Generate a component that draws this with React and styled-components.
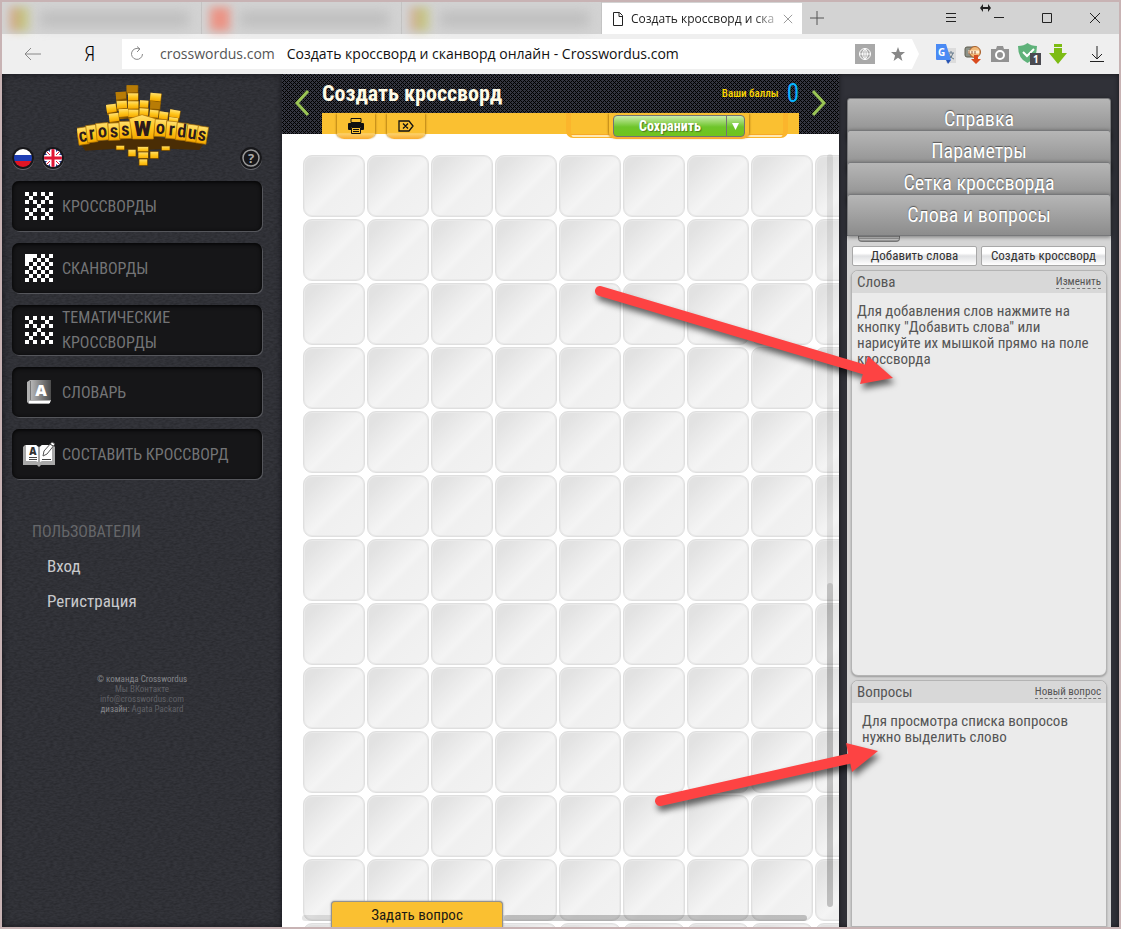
import styled, { createGlobalStyle } from "styled-components";

const condensed = `"Roboto Condensed", "Liberation Sans Narrow", "Open Sans Condensed", Roboto, sans-serif`;
const system = `"Open Sans", "Noto Sans", sans-serif`;

const noise = `url("data:image/svg+xml,%3Csvg xmlns='http://www.w3.org/2000/svg' width='120' height='120'%3E%3Cfilter id='n'%3E%3CfeTurbulence type='fractalNoise' baseFrequency='.25 .55' numOctaves='2' stitchTiles='stitch'/%3E%3CfeColorMatrix values='0 0 0 0 0 0 0 0 0 0 0 0 0 0 0 .4 0 0 0 -.12'/%3E%3C/filter%3E%3Crect width='120' height='120' filter='url(%23n)'/%3E%3C/svg%3E")`;
const mesh = `url("data:image/svg+xml,%3Csvg xmlns='http://www.w3.org/2000/svg' width='4' height='4' shape-rendering='crispEdges'%3E%3Cpath d='M0 0h1v1H0zM1 1h1v1H1zM2 2h1v1H2zM3 3h1v1H3zM3 1h1v1H3zM1 3h1v1H1z'/%3E%3C/svg%3E")`;

const GlobalStyle = createGlobalStyle`
  * { box-sizing: border-box; }
  body { margin: 0; font-family: ${condensed}; }
  button, input { font: inherit; color: inherit; border: 0; padding: 0; background: none; }
  a { color: inherit; text-decoration: none; }
  h1, h2, p { margin: 0; font-weight: inherit; }
  svg { display: block; flex: none; }
`;

const Window = styled.div`
  height: 100vh;
  display: flex;
  flex-direction: column;
  border: 2px solid #c8b3b4;
  overflow: hidden;
`;

/* browser chrome */

const TabStrip = styled.div`
  flex: none;
  height: 32px;
  display: flex;
  align-items: flex-end;
  background: #d3d3d3;
  font: 12px/18px ${system};
`;

const HiddenTabs = styled.div`
  width: 600px;
  height: 32px;
  display: flex;
`;

const HiddenTab = styled.div`
  flex: 1;
  display: flex;
  align-items: center;
  gap: 10px;
  padding: 4px 12px 2px 8px;
  border-right: 1px solid #c4c4c4;
`;

const Smudge = styled.span`
  width: 20px;
  height: 24px;
  filter: blur(5px);
  opacity: 0.6;
  background: ${(p) => p.$fill};
`;

const SmudgeLine = styled.span`
  flex: 1;
  height: 16px;
  filter: blur(6px);
  background: #bfbfbf;
`;

const ActiveTab = styled.div`
  width: 200px;
  height: 31px;
  display: flex;
  align-items: center;
  gap: 8px;
  padding: 0 9px 0 11px;
  background: #fff;
  color: #222;
`;

const TabTitle = styled.span`
  flex: 1;
  white-space: nowrap;
  mask-image: linear-gradient(to right, #000 85%, rgba(0, 0, 0, 0.3));
`;

const WindowButtons = styled.div`
  flex: 1;
  height: 32px;
  display: flex;
  align-items: center;
  justify-content: flex-end;
  gap: 36px;
  padding-right: 18px;
`;

const IconButton = styled.button`
  display: flex;
`;

const NewTab = styled(IconButton)`
  padding: 0 8px;
  align-self: center;
`;

const ResizeCursor = styled.svg`
  position: absolute;
  top: 4px;
  right: 130px;
`;

const AddressRow = styled.div`
  flex: none;
  height: 40px;
  display: flex;
  align-items: center;
  background: #efefef;
  font: 14px/20px ${system};
`;

const NavButtons = styled.div`
  width: 120px;
  display: flex;
  align-items: center;
  justify-content: space-between;
  padding: 0 27px 0 22px;
`;

const YandexButton = styled.button`
  font-family: ${condensed};
  font-size: 20px;
  font-weight: 300;
`;

const AddressBar = styled.div`
  flex: 1;
  height: 30px;
  display: flex;
  align-items: center;
  padding: 0 14px 0 8px;
  background: #fff;
  clip-path: polygon(0 0, calc(100% - 7px) 0, 100% 50%, calc(100% - 7px) 100%, 0 100%);
`;

const Domain = styled.label`
  padding: 0 12px 0 15px;
  color: #555;
`;

const PageName = styled.input`
  flex: 1;
  min-width: 0;
  color: #111;
`;

const AddressIcons = styled.div`
  display: flex;
  align-items: center;
  gap: 16px;
`;

const Extensions = styled.div`
  display: flex;
  align-items: center;
  gap: 8px;
  padding: 0 14px 0 17px;
`;

const DownloadButton = styled(IconButton)`
  margin-left: 14px;
`;

/* site */

const Site = styled.div`
  position: relative;
  flex: 1;
  min-height: 0;
  display: flex;
`;

const Sidebar = styled.aside`
  flex: none;
  width: 280px;
  padding: 10px 20px 0 10px;
  background: ${noise}, #34353b;
  box-shadow: inset 0 0 6px #15151a;
`;

const Brand = styled.div`
  height: 97px;
  display: grid;
  grid-template-columns: 65px 1fr 22px;
  align-items: start;
`;

const Languages = styled.div`
  display: flex;
  gap: 8px;
  padding-top: 63px;
`;

const RoundButton = styled.button`
  width: 22px;
  height: 22px;
  display: flex;
  align-items: center;
  justify-content: center;
  border-radius: 50%;
  background: #17171a;
  box-shadow: 0 1px 0 #66676c;
`;

const Help = styled(RoundButton)`
  margin-top: 63px;
`;

const Menu = styled.nav`
  display: grid;
  gap: 12px;
`;

const MenuItem = styled.a`
  height: 50px;
  display: flex;
  align-items: center;
  gap: 7px;
  padding: 0 10px;
  border-radius: 7px;
  background: #161618;
  box-shadow: inset 0 1px 4px #000, 1px 1px 0 #55565b;
  color: #737476;
  font-size: 16px;
  line-height: 25px;
  text-transform: uppercase;
`;

const MenuIcon = styled.span`
  flex: none;
  width: 33px;
  display: flex;
  justify-content: center;
`;

const Users = styled.section`
  padding: 40px 20px 0;
  color: #c8c9cc;
  font-size: 17px;
  line-height: 35px;
`;

const UsersTitle = styled.h2`
  color: #66676a;
  font-size: 16px;
  line-height: 25px;
  margin-bottom: 5px;
  text-transform: uppercase;
`;

const UserLink = styled.a`
  display: block;
  padding-left: 15px;
`;

const Credits = styled.footer`
  padding-top: 55px;
  padding-left: 10px;
  text-align: center;
  color: #606166;
  font-size: 9px;
  line-height: 10px;
`;

const CreditName = styled.span`
  color: #85868a;
`;

const Main = styled.main`
  position: relative;
  flex: 1;
  min-width: 0;
  display: flex;
  flex-direction: column;
  background: #fff;
`;

const Header = styled.header`
  flex: none;
  height: 60px;
  display: grid;
  grid-template-columns: 40px 1fr 40px;
  background: ${mesh}, #34353f;
`;

const Pager = styled.button`
  display: flex;
  justify-content: center;
  padding-top: 16px;
`;

const HeaderBody = styled.div`
  display: flex;
  flex-direction: column;
`;

const TitleRow = styled.div`
  height: 39px;
  display: flex;
  align-items: center;
  justify-content: space-between;
`;

const Title = styled.h1`
  color: #fffbe6;
  font-size: 22px;
  font-weight: bold;
  line-height: 38px;
`;

const Score = styled.p`
  display: flex;
  align-items: center;
  gap: 8px;
  color: #ffd800;
  font-size: 11px;
  font-weight: 500;
`;

const ScoreValue = styled.strong`
  color: #09b4ff;
  font-size: 25px;
  font-weight: normal;
`;

const Toolbar = styled.div`
  height: 21px;
  display: flex;
  align-items: flex-start;
  gap: 12px;
  padding: 0 11px 0 15px;
  background: #fac031;
`;

const ToolButton = styled.button`
  width: 38px;
  height: 26px;
  display: flex;
  align-items: center;
  justify-content: center;
  border-radius: 0 0 7px 7px;
  background: linear-gradient(#fac031 75%, #fcd06a 80%, #f9ac30);
  box-shadow: -2px 0 2px -1px #b98314, 2px 0 2px -1px #b98314;
`;

const SaveDock = styled.div`
  width: 222px;
  height: 25px;
  margin-left: auto;
  padding-left: 4px;
  display: flex;
  justify-content: center;
  border: solid #fbb52c;
  border-width: 0 5px 1px;
  border-radius: 0 0 7px 7px;
  background: linear-gradient(#fac031 21px, #f7a928 21px 22px, #ffe9b5 22px);
`;

const SaveFrame = styled.div`
  width: 140px;
  height: 26px;
  display: flex;
  padding: 2px 4px;
  border-radius: 0 0 7px 7px;
  background: linear-gradient(#fac031 70%, #faa832);
  box-shadow: -2px 0 2px -1px #b98314, 2px 0 2px -1px #b98314;
`;

const SaveButton = styled.button`
  flex: 1;
  height: 22px;
  border: 1px solid #737373;
  border-radius: 4px 0 0 4px;
  background: linear-gradient(#c9ecab, #6ec52a 55%, #71c41c);
  color: #fff;
  font-size: 14px;
  font-weight: bold;
  line-height: 20px;
  text-shadow: 1px 1px 1px #4c7a1c;
`;

const SaveMenu = styled(SaveButton)`
  flex: none;
  width: 19px;
  margin-left: -1px;
  display: flex;
  align-items: center;
  justify-content: center;
  border-radius: 0 4px 4px 0;
`;

const FieldClip = styled.div`
  flex: 1;
  min-height: 0;
  display: flex;
  overflow: hidden;
`;

/* one column wider than the view, so the last one runs under the edge */
const Field = styled.div`
  flex: none;
  width: calc(100% + 64px);
  display: grid;
  grid-template-columns: repeat(auto-fill, 62px);
  grid-auto-rows: 62px;
  gap: 2px;
  padding: 21px 0 0 21px;
`;

const Cell = styled.div`
  border: 1px solid #dfdfdf;
  border-radius: 9px;
  background: linear-gradient(135deg, #e2e2e2 15%, #f4f4f4 52%, #f0f0f0 60%, #f2f2f2) border-box;
  box-shadow: inset 0 0 0 1px #e9e9e9;
`;

const VerticalScroll = styled.div`
  position: absolute;
  top: 80px;
  right: 6px;
  bottom: 20px;
  width: 6px;
  display: flex;
  align-items: flex-end;
  border-radius: 3px;
  background: rgba(0, 0, 0, 0.08);
`;

const VerticalThumb = styled.div`
  width: 6px;
  height: 43%;
  border-radius: 3px;
  background: rgba(0, 0, 0, 0.14);
`;

const HorizontalScroll = styled.div`
  position: absolute;
  left: 20px;
  right: 32px;
  bottom: 6px;
  height: 6px;
  display: flex;
  justify-content: flex-end;
  border-radius: 3px;
  background: rgba(0, 0, 0, 0.1);
`;

const HorizontalThumb = styled.div`
  width: 60%;
  height: 6px;
  border-radius: 3px;
  background: rgba(0, 0, 0, 0.12);
`;

const AskButton = styled.button`
  position: absolute;
  left: 49px;
  bottom: 0;
  width: 172px;
  height: 26px;
  border: 1px solid #929292;
  border-bottom: 0;
  border-radius: 4px 4px 0 0;
  background: #fac031;
  box-shadow: 0 0 2px #888;
  color: #1c1a14;
  font-size: 15px;
`;

const Tools = styled.aside`
  flex: none;
  width: 280px;
  display: flex;
  flex-direction: column;
  padding: 24px 8px 0;
  background: #303138;
  box-shadow: inset 0 0 5px #17171b;
`;

const Accordion = styled.div`
  position: relative;
  display: grid;
  grid-auto-rows: 32px;
  padding-bottom: 10px;
`;

const AccordionTab = styled.button`
  height: 42px;
  border: 1px solid #77787a;
  border-radius: 3px 3px 0 0;
  background: linear-gradient(#b6b6b6, #8c8c8c);
  box-shadow: 0 1px 4px rgba(0, 0, 0, 0.45);
  color: #fff;
  font-size: 20px;
  text-shadow: 0 -1px 1px #555;
`;

const ToolsBody = styled.div`
  flex: 1;
  display: flex;
  flex-direction: column;
  gap: 4px;
  padding: 0 4px;
  background: #d5d5d5;
`;

const Handle = styled.div`
  width: 42px;
  height: 6px;
  margin: 0 0 0 7px;
  border: 1px solid #777;
  border-top: 0;
  border-radius: 0 0 4px 4px;
  background: linear-gradient(#999 1px, #c4c4c4 1px 2px, #999 2px 3px, #c4c4c4 3px 4px, #999 4px);
`;

const WordActions = styled.div`
  display: grid;
  grid-template-columns: 1fr 1fr;
  gap: 4px;
  padding: 0 1px;
`;

const WordButton = styled.button`
  height: 20px;
  border: 1px solid #a8a8a8;
  border-radius: 2px;
  background: linear-gradient(#fff 35%, #e0e1e3 50%, #fff);
  color: #333;
  font-size: 13px;
  line-height: 16px;
`;

const Panel = styled.section`
  ${(p) => (p.$grow ? "flex: 1; border-radius: 7px 7px 0 0;" : "height: 406px; border-radius: 7px;")}
  overflow: hidden;
  border: 1px solid #b4b4b4;
  background: #ebebeb;
  box-shadow: 0 1px 2px #999;
`;

const PanelHead = styled.header`
  height: 22px;
  display: flex;
  align-items: center;
  justify-content: space-between;
  padding: 0 5px;
  background: #d8d8d8;
  color: #555;
  font-size: 15px;
`;

const PanelAction = styled.button`
  border-bottom: 1px dashed #777;
  font-size: 11px;
  line-height: 13px;
`;

const PanelText = styled.p`
  padding: 10px ${(p) => (p.$inset ? 10 : 5)}px;
  color: #555;
  font-size: 15px;
  line-height: 16px;
`;

const Arrow = styled.svg`
  position: absolute;
  top: ${(p) => p.$top}px;
  right: ${(p) => p.$right}px;
  filter: drop-shadow(2px 5px 3px rgba(0, 0, 0, 0.6));
  pointer-events: none;
`;

const sparse = ["1010101", "0100010", "1010101", "0001000", "1010101", "0100010", "1010101"];
const dense = ["1110101", "1101010", "1010101", "0101010", "1010101", "0101010", "1010101"];

const Checker = ({ rows }) => (
  <svg width="28" height="28" viewBox="0 0 7 7" shapeRendering="crispEdges" fill="#fff">
    {rows.flatMap((row, y) =>
      [...row].map((on, x) => on === "1" && <rect key={`${x}-${y}`} x={x} y={y} width="1" height="1" />)
    )}
  </svg>
);

const BookIcon = () => (
  <svg width="24" height="26" viewBox="0 0 24 26">
    <defs>
      <linearGradient id="cover">
        <stop offset="0" stopColor="#b5b5b5" />
        <stop offset="1" stopColor="#4c4c4c" />
      </linearGradient>
    </defs>
    <path d="M3 1h21v21l-2 3H2l-2-2V3z" fill="#b0b0b0" />
    <path d="M4 1h20v20H4z" fill="url(#cover)" />
    <path d="M2 22h21v2H2z" fill="#fff" />
    <path d="M3.500 2v19" stroke="#777" />
    <text x="14" y="17" textAnchor="middle" fontFamily="Open Sans" fontWeight="800" fontSize="16" fill="#fff">A</text>
  </svg>
);

const ComposeIcon = () => (
  <svg width="32" height="26" viewBox="0 0 32 26">
    <path d="M0 6l2-2h11l3 2 3-2h11l2 2v18H18l-2 2-2-2H0z" fill="#a9a9a9" />
    <path d="M3 4h10l2 2v15l-2-1H3zM29 4H19l-2 2v15l2-1h10z" fill="#fff" />
    <text x="10" y="14" textAnchor="middle" fontFamily="Open Sans" fontWeight="800" fontSize="10" fill="#333">A</text>
    <path d="M6 16.500h8M6 18.500h8M19 18.500h9" stroke="#444" />
    <path d="M20 15l1-5 8-9 3 2-8 10z" fill="#fff" stroke="#555" />
    <path d="M27 3l3 2" stroke="#333" />
  </svg>
);

const menu = [
  { label: "Кроссворды", icon: <Checker rows={sparse} /> },
  { label: "Сканворды", icon: <Checker rows={dense} /> },
  { label: "Тематические кроссворды", icon: <Checker rows={sparse} /> },
  { label: "Словарь", icon: <BookIcon /> },
  { label: "Составить кроссворд", icon: <ComposeIcon /> },
];

const logoLetters = [
  ["c", 233, 160, 31, -9],
  ["r", 260, 153, 31, -7],
  ["o", 289, 147, 37, -5],
  ["s", 325, 147, 34, -3],
  ["s", 358, 142, 36, -2],
  ["o", 463, 136, 37, 3],
  ["r", 498, 142, 34, 5],
  ["d", 529, 147, 34, 6],
  ["u", 560, 152, 34, 8],
  ["s", 591, 157, 31, 9],
];

const logoBlocks = [
  [380, 34, 35, 24, 0, 1], [347, 55, 32, 24, -4, 1], [384, 58, 32, 24, 0], [452, 56, 34, 26, 6],
  [318, 93, 31, 27, -8], [350, 82, 32, 25, -4], [384, 82, 33, 25, 0], [420, 79, 27, 24, 3],
  [452, 82, 31, 24, 5, 1], [511, 106, 32, 25, 9], [326, 120, 31, 27, -7], [356, 106, 30, 26, -4],
  [385, 107, 32, 25, 0], [419, 103, 28, 24, 3], [450, 107, 28, 25, 5], [479, 112, 28, 25, 7], [508, 129, 29, 20, 8],
];

const logoDrops = [
  [348, 214, 26, 14], [384, 226, 24, 22], [412, 218, 34, 16], [414, 234, 31, 20],
  [417, 255, 26, 20], [450, 232, 26, 22], [484, 216, 26, 14],
];

const Logo = () => (
  <svg width="133" height="84" viewBox="231 30 399 252" role="img" aria-label="Crosswordus">
    <defs>
      <linearGradient id="gold" x2="0" y2="1">
        <stop offset="0" stopColor="#ffdf70" />
        <stop offset="0.5" stopColor="#ffc820" />
        <stop offset="1" stopColor="#f5a800" />
      </linearGradient>
      <linearGradient id="bronze" x2="1" y2="1">
        <stop offset="0" stopColor="#c88700" />
        <stop offset="1" stopColor="#6b4300" />
      </linearGradient>
    </defs>
    {logoBlocks.map(([x, y, w, h, r, dark]) => (
      <g key={`${x}-${y}`} transform={`rotate(${r} ${x} ${y})`}>
        <rect x={x} y={y} width={w} height={h + 4} fill="url(#bronze)" />
        <rect x={x} y={y} width={w - 2} height={h - 3} fill={dark ? "#b87c06" : "url(#gold)"} />
      </g>
    ))}
    <path d="M242 210l152-22h66l152 20-14 20-90-4-80 4-80-4-92 6z" fill="#4a2d05" />
    {logoDrops.map(([x, y, w, h]) => (
      <rect key={`${x}-${y}`} x={x} y={y} width={w} height={h} fill="url(#gold)" stroke="#5d3b00" strokeWidth="2" />
    ))}
    {logoLetters.map(([letter, x, y, w, r]) => (
      <g key={x} transform={`rotate(${r} ${x + w / 2} ${y + 26})`}>
        <rect x={x} y={y} width={w} height="52" fill="url(#gold)" stroke="#a56a00" strokeWidth="2" />
        <text x={x + w / 2} y={y + 43} textAnchor="middle" fontFamily="Roboto Condensed" fontWeight="600" fontSize="56" fill="#2d1b1b">
          {letter}
        </text>
      </g>
    ))}
    <path d="M388 134l38-12 40 12-6 61h-62z" fill="url(#gold)" stroke="#b87500" strokeWidth="2" />
    <text x="428" y="185" textAnchor="middle" fontFamily="Roboto Condensed" fontWeight="800" fontSize="84" fill="#2d1b1b">w</text>
  </svg>
);

const Cross = ({ size = 12, color = "#222" }) => (
  <svg width={size} height={size} viewBox="0 0 12 12" stroke={color} fill="none">
    <path d="M1 1l10 10M11 1L1 11" />
  </svg>
);

const Browser = () => (
  <>
    <TabStrip>
      <HiddenTabs>
        <HiddenTab>
          <Smudge $fill="linear-gradient(90deg, #d97b52, #b7b843 60%, #c9c98a)" />
          <SmudgeLine />
        </HiddenTab>
        <HiddenTab>
          <Smudge $fill="#fb6a52" />
          <SmudgeLine />
        </HiddenTab>
        <HiddenTab>
          <Smudge $fill="linear-gradient(90deg, #d9927b, #b7b843 60%, #c9c98a)" />
          <SmudgeLine />
        </HiddenTab>
      </HiddenTabs>
      <ActiveTab>
        <svg width="10" height="14" viewBox="0 0 10 14" fill="none" stroke="#222">
          <path d="M.5.5h6l3 3v10h-9zM6 .5v4h3.500" />
        </svg>
        <TabTitle>Создать кроссворд и ска</TabTitle>
        <IconButton aria-label="Закрыть вкладку"><Cross size={10} color="#888" /></IconButton>
      </ActiveTab>
      <NewTab aria-label="Новая вкладка">
        <svg width="14" height="14" viewBox="0 0 14 14" stroke="#555"><path d="M7 0v14M0 7h14" /></svg>
      </NewTab>
      <WindowButtons>
        <IconButton aria-label="Меню">
          <svg width="12" height="12" viewBox="0 0 12 12" stroke="#222"><path d="M1 1.500h10M1 5.500h10M1 9.500h10" /></svg>
        </IconButton>
        <IconButton aria-label="Свернуть">
          <svg width="12" height="12" viewBox="0 0 12 12" stroke="#222"><path d="M1 5.500h10" /></svg>
        </IconButton>
        <IconButton aria-label="Развернуть">
          <svg width="12" height="12" viewBox="0 0 12 12" stroke="#222" fill="none"><path d="M1.500 1.500h9v9h-9z" /></svg>
        </IconButton>
        <IconButton aria-label="Закрыть"><Cross /></IconButton>
      </WindowButtons>
      <ResizeCursor width="11" height="8" viewBox="0 0 11 8" fill="#222">
        <path d="M0 4l3-4v3h5V0l3 4-3 4V5H3v3z" />
      </ResizeCursor>
    </TabStrip>
    <AddressRow>
      <NavButtons>
        <IconButton aria-label="Назад">
          <svg width="18" height="14" viewBox="0 0 18 14" fill="none" stroke="#888"><path d="M17 7H1M7 1L1 7l6 6" /></svg>
        </IconButton>
        <YandexButton>Я</YandexButton>
      </NavButtons>
      <AddressBar>
        <IconButton aria-label="Обновить">
          <svg width="15" height="16" viewBox="0 0 15 16" fill="none" stroke="#888">
            <path d="M12.500 8a5.500 5.500 0 1 1-3-5h-1M7 .5l3 2.500-3 3" />
          </svg>
        </IconButton>
        <Domain htmlFor="address">crosswordus.com</Domain>
        <PageName id="address" readOnly value="Создать кроссворд и сканворд онлайн - Crosswordus.com" />
        <AddressIcons>
          <svg width="20" height="20" viewBox="0 0 20 20" fill="none" stroke="#fff">
            <path d="M0 0h20v20H0z" fill="#a9a9a9" stroke="none" />
            <circle cx="10" cy="10" r="5.500" />
            <path d="M4.500 10h11M10 4.500v11M10 4.500q-5 5.500 0 11M10 4.500q5 5.500 0 11" />
          </svg>
          <svg width="14" height="14" viewBox="0 0 13 13" fill="#888">
            <path d="M6.500 0l1.700 4.700H13L9.200 7.900l1.400 5.100-4.100-3-4.100 3 1.400-5.100L0 4.700h4.800z" />
          </svg>
        </AddressIcons>
      </AddressBar>
      <Extensions>
        <svg width="20" height="20" viewBox="0 0 20 20">
          <path d="M8 4h12v15H10z" fill="#dcdcdc" />
          <path d="M12 9h6M15 7v2M17 9q-1 5-5 6M13 10q1 4 5 5" stroke="#667b8c" fill="none" />
          <path d="M0 0h10l5 16H1q-1 0-1-1z" fill="#4a8af4" />
          <path d="M10 16h5l-3 4z" fill="#2653b5" />
          <text x="2" y="12" fontFamily="Open Sans" fontWeight="700" fontSize="10" fill="#fff">G</text>
        </svg>
        <svg width="18" height="20" viewBox="0 0 18 20">
          <rect x="1" y="3" width="10" height="10" rx="2" fill="#8b9188" stroke="#5e5b4c" />
          <circle cx="11" cy="8" r="5.500" fill="#f1b878" stroke="#a65c28" />
          <path d="M4 8h11" stroke="#fff1d4" strokeWidth="3" />
          <path d="M5 7v3M8 7v3M11 7v3" stroke="#9a5530" />
          <path d="M10 11h4v4h3l-5 5-5-5h3z" fill="#d94a1e" />
        </svg>
        <svg width="20" height="20" viewBox="0 0 20 20">
          <path d="M1 5h5l1-3h6l1 3h5v13H1z" fill="#929292" />
          <circle cx="10" cy="11" r="4" fill="#929292" stroke="#fff" strokeWidth="2" />
        </svg>
        <svg width="23" height="22" viewBox="0 0 23 22">
          <path d="M0 3q6 0 9.500-3Q13 3 19 3q0 13-9.500 17Q0 16 0 3z" fill="#5fb27a" />
          <path d="M5 9l4 4 7-7" stroke="#fff" strokeWidth="2" fill="none" />
          <path d="M12 10h11v12H12z" fill="#4a4a50" />
          <text x="15" y="20" fontFamily="Open Sans" fontWeight="700" fontSize="10" fill="#fff">1</text>
        </svg>
        <svg width="18" height="20" viewBox="0 0 18 20">
          <path d="M5 0h8v3H5zM5 4h8v5h5l-9 11L0 9h5z" fill="#7dbc14" />
        </svg>
        <DownloadButton aria-label="Загрузки">
          <svg width="16" height="18" viewBox="0 0 16 18" stroke="#222" fill="none"><path d="M8 1v13M3 9l5 5 5-5M1 16.500h14" /></svg>
        </DownloadButton>
      </Extensions>
    </AddressRow>
  </>
);

const App = () => (
  <Window>
    <GlobalStyle />
    <Browser />
    <Site>
      <Sidebar>
        <Brand>
          <Languages>
            <RoundButton aria-label="Русский">
              <svg width="18" height="18" viewBox="0 0 18 18">
                <clipPath id="round"><circle cx="9" cy="9" r="9" /></clipPath>
                <g clipPath="url(#round)">
                  <path d="M0 0h18v6H0z" fill="#fff" />
                  <path d="M0 6h18v6H0z" fill="#1f3fb5" />
                  <path d="M0 12h18v6H0z" fill="#e01525" />
                </g>
              </svg>
            </RoundButton>
            <RoundButton aria-label="English">
              <svg width="18" height="18" viewBox="0 0 18 18">
                <g clipPath="url(#round)">
                  <path d="M0 0h18v18H0z" fill="#2a3f9a" />
                  <path d="M0 0l18 18M18 0L0 18" stroke="#fff" strokeWidth="4" />
                  <path d="M0 0l18 18M18 0L0 18" stroke="#e01535" strokeWidth="1" />
                  <path d="M9 0v18M0 9h18" stroke="#fff" strokeWidth="6" />
                  <path d="M9 0v18M0 9h18" stroke="#e01535" strokeWidth="3" />
                </g>
              </svg>
            </RoundButton>
          </Languages>
          <Logo />
          <Help aria-label="Помощь">
            <svg width="18" height="18" viewBox="0 0 18 18">
              <circle cx="9" cy="9" r="8" fill="none" stroke="#9a9a9a" strokeWidth="1.500" />
              <text x="9" y="14" textAnchor="middle" fontFamily="Open Sans" fontWeight="700" fontSize="13" fill="#aaa">?</text>
            </svg>
          </Help>
        </Brand>
        <Menu>
          {menu.map((item) => (
            <MenuItem href="#" key={item.label}>
              <MenuIcon>{item.icon}</MenuIcon>
              {item.label}
            </MenuItem>
          ))}
        </Menu>
        <Users>
          <UsersTitle>Пользователи</UsersTitle>
          <UserLink href="#">Вход</UserLink>
          <UserLink href="#">Регистрация</UserLink>
        </Users>
        <Credits>
          <CreditName>© команда Crosswordus</CreditName>
          <br />
          <a href="#">Мы ВКонтакте</a>
          <br />
          <a href="#">info@crosswordus.com</a>
          <br />
          <CreditName>дизайн:</CreditName> <a href="#">Agata Packard</a>
        </Credits>
      </Sidebar>

      <Main>
        <Header>
          <Pager aria-label="Назад">
            <svg width="14" height="26" viewBox="0 0 14 26" fill="none" stroke="#9bc555" strokeWidth="3"><path d="M13 1L2 13l11 12" /></svg>
          </Pager>
          <HeaderBody>
            <TitleRow>
              <Title>Создать кроссворд</Title>
              <Score>Ваши баллы <ScoreValue>0</ScoreValue></Score>
            </TitleRow>
            <Toolbar>
              <ToolButton aria-label="Печать">
                <svg width="16" height="16" viewBox="0 0 16 16" fill="#111">
                  <path d="M3 .5h10v4H3z" fill="none" stroke="#111" />
                  <path d="M0 6q0-1 1-1h14q1 0 1 1v5q0 1-1 1h-2V9H3v3H1q-1 0-1-1z" />
                  <path d="M3.500 9.500h9v6h-9zM5 11.500h6M5 13.500h6" fill="none" stroke="#111" />
                </svg>
              </ToolButton>
              <ToolButton aria-label="Очистить">
                <svg width="16" height="12" viewBox="0 0 16 12" fill="none" stroke="#111" strokeWidth="1.300">
                  <path d="M1 1h10l4 5-4 5H1zM5 3.500l5 5M10 3.500l-5 5" />
                </svg>
              </ToolButton>
              <SaveDock>
                <SaveFrame>
                  <SaveButton>Сохранить</SaveButton>
                  <SaveMenu aria-label="Варианты сохранения">
                    <svg width="7" height="7" viewBox="0 0 7 7" fill="#fff"><path d="M0 0h7L3.500 7z" /></svg>
                  </SaveMenu>
                </SaveFrame>
              </SaveDock>
            </Toolbar>
          </HeaderBody>
          <Pager aria-label="Вперёд">
            <svg width="14" height="26" viewBox="0 0 14 26" fill="none" stroke="#9bc555" strokeWidth="3"><path d="M1 1l11 12L1 25" /></svg>
          </Pager>
        </Header>
        <FieldClip>
          <Field>
            {Array.from({ length: 117 }, (_, i) => <Cell key={i} />)}
          </Field>
        </FieldClip>
        <VerticalScroll><VerticalThumb /></VerticalScroll>
        <HorizontalScroll><HorizontalThumb /></HorizontalScroll>
        <AskButton>Задать вопрос</AskButton>
      </Main>

      <Tools>
        <Accordion>
          <AccordionTab>Справка</AccordionTab>
          <AccordionTab>Параметры</AccordionTab>
          <AccordionTab>Сетка кроссворда</AccordionTab>
          <AccordionTab>Слова и вопросы</AccordionTab>
        </Accordion>
        <ToolsBody>
          <Handle />
          <WordActions>
            <WordButton>Добавить слова</WordButton>
            <WordButton>Создать кроссворд</WordButton>
          </WordActions>
          <Panel>
            <PanelHead>Слова <PanelAction>Изменить</PanelAction></PanelHead>
            <PanelText>
              Для добавления слов нажмите на кнопку "Добавить слова" или нарисуйте их мышкой прямо на поле кроссворда
            </PanelText>
          </Panel>
          <Panel $grow>
            <PanelHead>Вопросы <PanelAction>Новый вопрос</PanelAction></PanelHead>
            <PanelText $inset>Для просмотра списка вопросов нужно выделить слово</PanelText>
          </Panel>
        </ToolsBody>
      </Tools>

      <Arrow $top={206} $right={209} width="320" height="120" viewBox="590 280 320 120">
        <path d="M600 291l266 79" stroke="#fd4343" strokeWidth="10" strokeLinecap="round" />
        <path d="M868 356l25 22-33 6z" fill="#fd4343" />
      </Arrow>
      <Arrow $top={656} $right={219} width="250" height="90" viewBox="650 730 250 90">
        <path d="M660 801l192-43" stroke="#fd4343" strokeWidth="10" strokeLinecap="round" />
        <path d="M846 743l32 8-26 21z" fill="#fd4343" />
      </Arrow>
    </Site>
  </Window>
);

export default App;
